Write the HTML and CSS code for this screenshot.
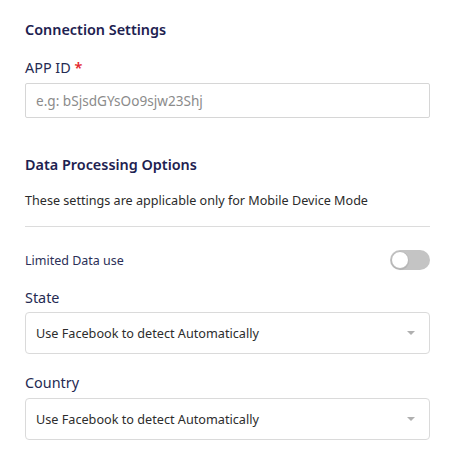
FILE: index.html
```html
<!DOCTYPE html>
<html>
<head>
<meta charset="utf-8">
<link rel="stylesheet" href="styles.css">
</head>
<body>
<div class="panel">
  <h2 class="heading first">Connection Settings</h2>
  <label class="label app-label">APP ID <span class="req">*</span></label>
  <div class="input"><span class="placeholder">e.g: bSjsdGYsOo9sjw23Shj</span></div>

  <h2 class="heading second">Data Processing Options</h2>
  <p class="desc">These settings are applicable only for Mobile Device Mode</p>
  <div class="divider"></div>

  <div class="toggle-row">
    <span class="toggle-label">Limited Data use</span>
    <span class="toggle"><span class="knob"></span></span>
  </div>

  <label class="label state-label">State</label>
  <div class="select state-select"><span>Use Facebook to detect Automatically</span><span class="arrow"></span></div>

  <label class="label country-label">Country</label>
  <div class="select country-select"><span>Use Facebook to detect Automatically</span><span class="arrow"></span></div>
</div>
</body>
</html>
```
FILE: styles.css
```css
* { box-sizing: border-box; }
html, body { margin: 0; padding: 0; background: #fff; }
body { font-family: "Noto Sans", "Open Sans", sans-serif; }
.panel { width: 452px; padding: 0 22px 0 25px; display: flex; flex-direction: column; }
.heading { margin: 0; font-size: 14.4px; font-weight: 600; line-height: 20px; color: #1d2150; }
.heading.first { margin-top: 20px; }
.heading.second { margin-top: 37px; }
.label { display: block; font-size: 14.4px; line-height: 20px; color: #252a52; font-weight: 400; }
.app-label { margin-top: 18px; }
.req { color: #e3262b; font-weight: 600; }
.input { margin-top: 5px; height: 35px; border: 1px solid #d6d6d6; border-radius: 2px; padding: 0 10px; display: flex; align-items: center; }
.placeholder { font-size: 13.6px; color: #8b8b8b; }
.desc { margin: 17px 0 0; font-size: 12.6px; line-height: 18px; color: #2b2b2b; }
.divider { margin-top: 16px; height: 1px; background: #dcdcdc; }
.toggle-row { margin-top: 23px; height: 20px; display: flex; align-items: center; justify-content: space-between; }
.toggle-label { font-size: 12.5px; color: #2b2f57; }
.toggle { width: 40px; height: 20px; border-radius: 10px; background: #c4c4c4; position: relative; display: block; }
.knob { position: absolute; left: 1px; top: 1px; width: 18px; height: 18px; border-radius: 50%; background: #fff; border: 1px solid #b8b8b8; box-shadow: 0 1px 1px rgba(0,0,0,0.1); }
.state-label { margin-top: 18px; }
.country-label { margin-top: 19px; }
.select { height: 42px; border: 1px solid #dadada; border-radius: 4px; padding: 0 14px 0 10px; display: flex; align-items: center; justify-content: space-between; font-size: 12.66px; color: #2d2d2d; }
.state-select { margin-top: 4px; }
.country-select { margin-top: 5px; }
.arrow { width: 0; height: 0; border-left: 4px solid transparent; border-right: 4px solid transparent; border-top: 4px solid #b0b0b0; }
```
